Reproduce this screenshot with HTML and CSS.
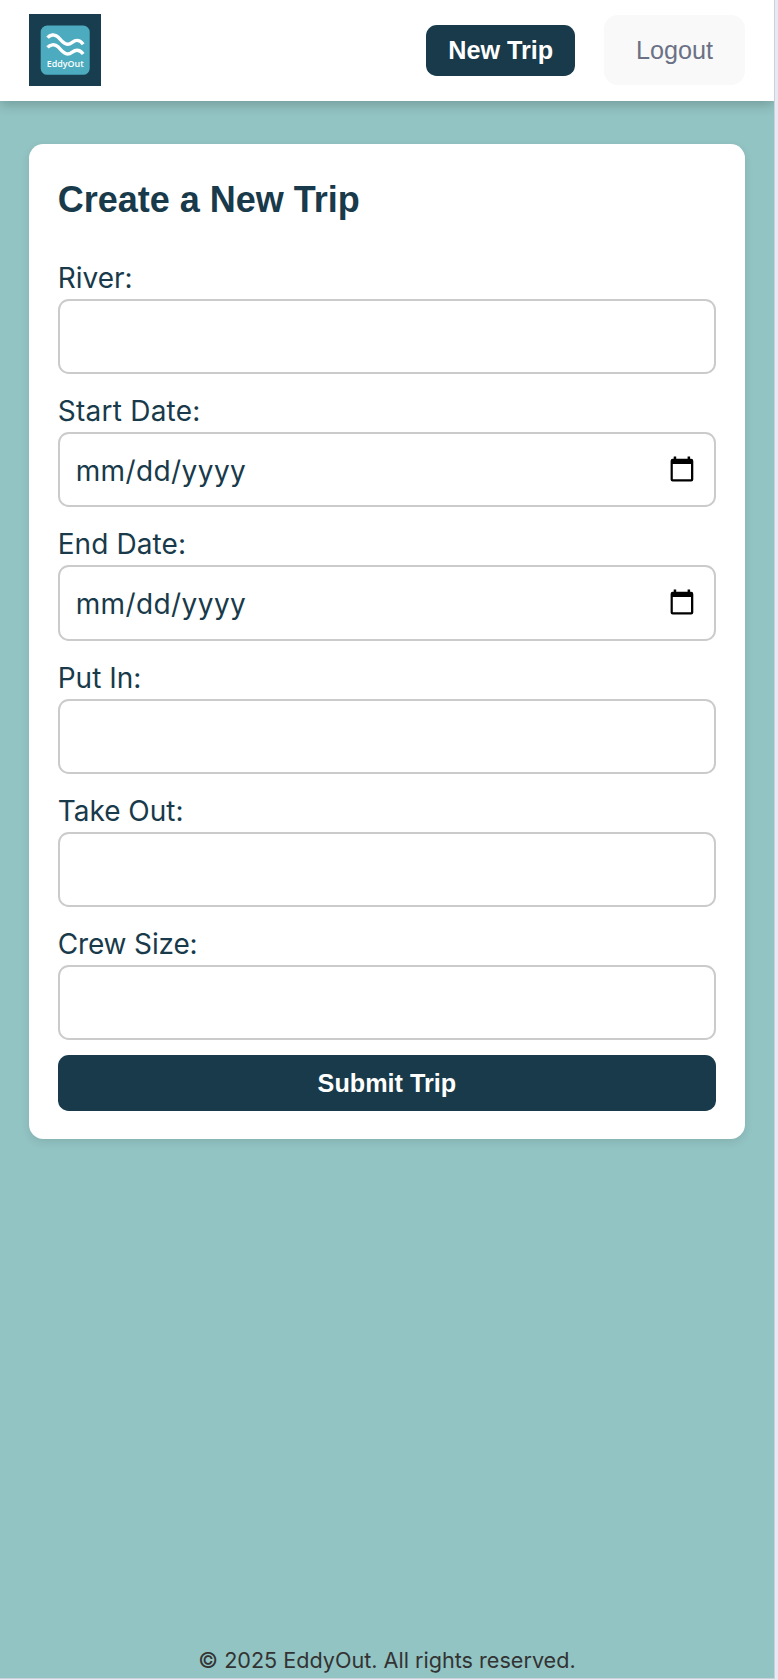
FILE: index.html
```html
<!DOCTYPE html>
<html lang="en">
<head>
<meta charset="utf-8">
<title>EddyOut</title>
<link rel="stylesheet" href="styles.css">
</head>
<body>
<div class="page">
  <header class="header">
    <svg class="logo" viewBox="0 0 72.4 72.4" role="img" aria-label="EddyOut">
      <rect width="72.4" height="72.4" fill="#183d4f"/>
      <rect x="11.7" y="11.5" width="49" height="49.3" rx="6.5" fill="#4cabbe"/>
      <path d="M18.5 23.6C21 21 25.5 19.5 29 23C32 26 34.5 30.2 38.5 30.2C43 30.2 43.5 26.4 48 26.4C50.5 26.4 52.5 28 54.2 30.2M18.5 33.4C21 30.8 25.5 29.3 29 32.8C32 35.8 34.5 40 38.5 40C43 40 43.5 36.2 48 36.2C50.5 36.2 52.5 37.8 54.2 40" fill="none" stroke="#fff" stroke-width="3.4"/>
      <text class="logo-text" x="36.2" y="53" text-anchor="middle" textLength="37" lengthAdjust="spacingAndGlyphs">EddyOut</text>
    </svg>
    <nav class="nav">
      <button class="button new-trip">New Trip</button>
      <button class="button logout">Logout</button>
    </nav>
  </header>
  <main class="main">
    <form class="card">
      <h1 class="title">Create a New Trip</h1>
      <div class="fields">
        <label class="field"><span class="label">River:</span><span class="input"></span></label>
        <label class="field"><span class="label start">Start Date:</span>
          <span class="input"><span class="date">mm/dd/yyyy</span>
            <svg class="calendar" viewBox="0 0 24 26"><path fill="#000" fill-rule="evenodd" d="M3.7 0.5h2.5v2.3h11.4V0.5h2.5v2.3h1.1a2.1 2.1 0 0 1 2.1 2.1v18.5a2.1 2.1 0 0 1-2.1 2.1H2.7a2.1 2.1 0 0 1-2.1-2.1V4.9a2.1 2.1 0 0 1 2.1-2.1h1zM2.8 8.1v15.1h18.2V8.1z"/></svg>
          </span></label>
        <label class="field"><span class="label end">End Date:</span>
          <span class="input"><span class="date">mm/dd/yyyy</span>
            <svg class="calendar" viewBox="0 0 24 26"><path fill="#000" fill-rule="evenodd" d="M3.7 0.5h2.5v2.3h11.4V0.5h2.5v2.3h1.1a2.1 2.1 0 0 1 2.1 2.1v18.5a2.1 2.1 0 0 1-2.1 2.1H2.7a2.1 2.1 0 0 1-2.1-2.1V4.9a2.1 2.1 0 0 1 2.1-2.1h1zM2.8 8.1v15.1h18.2V8.1z"/></svg>
          </span></label>
        <label class="field"><span class="label">Put In:</span><span class="input"></span></label>
        <label class="field"><span class="label">Take Out:</span><span class="input"></span></label>
        <label class="field"><span class="label crew">Crew Size:</span><span class="input"></span></label>
      </div>
      <button class="button submit" type="button">Submit Trip</button>
    </form>
  </main>
  <footer class="footer">© 2025 EddyOut. All rights reserved.</footer>
</div>
</body>
</html>
```
FILE: styles.css
```css
* { box-sizing: border-box; }
body {
  margin: 0;
  background: #e8eaf3;
  color: #183a4a;
  font-family: Inter, sans-serif;
}
.page {
  display: flex;
  flex-direction: column;
  width: 775px;
  height: 1679px;
  border-right: 1px solid #cdd0d6;
  border-bottom: 1px solid #cdd0d6;
  background: #92c4c3;
}
.header {
  display: flex;
  align-items: center;
  justify-content: space-between;
  height: 100.6px;
  padding: 0 29px 0 28.6px;
  background: #fff;
  box-shadow: 0 4px 11px rgba(0, 0, 0, .2);
  clip-path: inset(0 0 -30px 0);
}
.logo { width: 72.4px; height: 72.4px; }
.logo-text { font: 600 9px "Open Sans", sans-serif; fill: #fff; }
.nav { display: flex; align-items: center; gap: 29px; }
.button {
  margin: 0;
  padding: 0;
  border: 0;
  border-radius: 10.8px;
  font: 700 25.2px "Liberation Sans", Arial, sans-serif;
  color: #fff;
  background: #183a4a;
}
.new-trip { width: 148.6px; height: 50.6px; }
.logout {
  width: 141px;
  height: 70px;
  border-radius: 14px;
  font-weight: 400;
  color: #6b7285;
  background: #f9f9f9;
}
.main { flex: 1; padding: 43.4px 29px 0 28.7px; }
.card {
  height: 995.2px;
  padding: 29px;
  border-radius: 14.4px;
  background: #fff;
  box-shadow: 0 3px 8px rgba(0, 0, 0, .1);
}
.title {
  margin: 0 0 35px;
  font: 700 36px/53px "Liberation Sans", Arial, sans-serif;
}
.fields { display: flex; flex-direction: column; gap: 20px; }
.field { display: flex; flex-direction: column; gap: 4px; }
.label {
  height: 34px;
  font-size: 28px;
  font-weight: 420;
  line-height: 34px;
}
.start { letter-spacing: .25px; }
.end { letter-spacing: .1px; }
.crew { letter-spacing: -.15px; }
.input {
  display: flex;
  align-items: center;
  justify-content: space-between;
  height: 75.2px;
  padding: 0 20px 0 16px;
  border: 2px solid #cbcbcb;
  border-radius: 10.8px;
  background: #fff;
}
.date {
  padding-top: 2px;
  font-size: 28px;
  font-weight: 420;
  letter-spacing: .4px;
}
.calendar { width: 24px; height: 26px; margin-bottom: 2px; }
.submit { display: block; width: 100%; height: 56px; margin-top: 14.4px; padding-top: 1px; }
.footer {
  padding-bottom: 4px;
  font-size: 21.6px;
  line-height: 28px;
  text-align: center;
  color: #333;
}
```
